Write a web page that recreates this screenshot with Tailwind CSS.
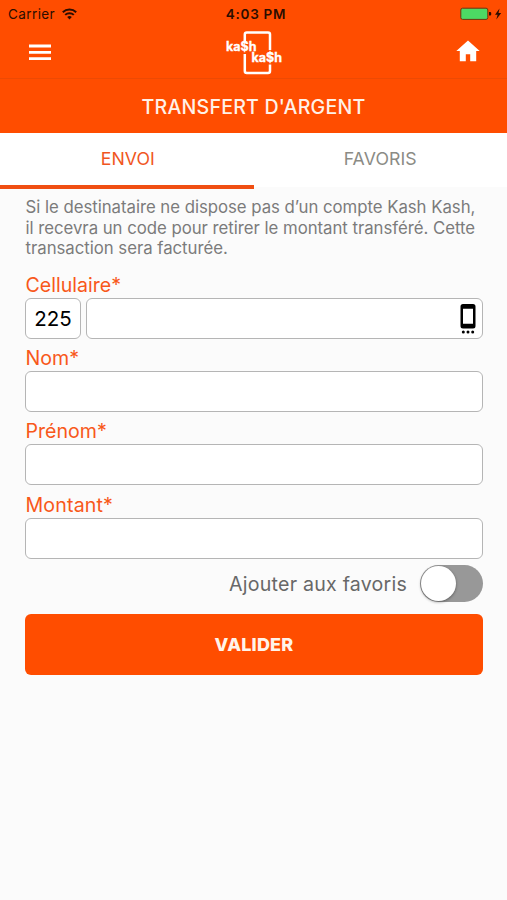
<!DOCTYPE html>
<html lang="fr">
<head>
<meta charset="utf-8">
<title>Transfert d'argent</title>
<script src="https://cdn.jsdelivr.net/npm/@tailwindcss/browser@4"></script>
</head>
<body class="w-[507px] h-[900px] overflow-hidden bg-[#fbfbfb] font-['Inter','Liberation_Sans',sans-serif]">
<header class="bg-[#ff4d00]">
  <div class="grid grid-cols-3 items-center h-[27px] px-2 text-[13.5px] leading-[27px] text-[#2b0d00]">
    <div class="flex items-center gap-[7px]"><span class="tracking-[0.4px]">Carrier</span>
      <svg class="w-[15px] h-[12px] -mt-px" viewBox="0 0 15 12" fill="none" stroke="#2b0d00" stroke-width="2"><path d="M.8 4.3a9.6 9.6 0 0 1 13.4 0M3.2 6.9a6.1 6.1 0 0 1 8.6 0"/><path d="M7.5 11.4L5.2 9.1a3.3 3.3 0 0 1 4.6 0z" fill="#2b0d00" stroke="none"/></svg>
    </div>
    <div class="text-center font-semibold tracking-[0.7px] pl-[5px] pt-px">4:03 PM</div>
    <div class="flex justify-end items-center -mr-[3px]">
      <svg class="w-[42px] h-[14px]" viewBox="0 0 42 14"><rect x=".8" y="1.2" width="27" height="11.2" rx="1.8" fill="#4cd964" stroke="#6b3510"/><path d="M29 5h1.2a1 1 0 0 1 1 1v1.600a1 1 0 0 1-1 1H29z" fill="#2b0d00"/><path d="M39.500 1.500L35 7.800h2.600l-1.300 4.700 4.900-6.400h-2.700z" fill="#2b0d00"/></svg>
    </div>
  </div>
  <div class="grid grid-cols-3 items-center h-[52px] border-b border-[#ed4a04] pl-[29px] pr-[27px]">
    <svg class="w-[22px] h-[17px] -mt-px" viewBox="0 0 22 17" fill="#fff"><path d="M0 .6h22v2.800H0zM0 6.900h22v2.800H0zM0 13.200h22V16H0z"/></svg>
    <svg class="w-[60px] h-[48px] justify-self-center -mt-px" viewBox="0 0 60 48">
      <path d="M20.800 13V6.500a2 2 0 0 1 2-2H44a2 2 0 0 1 2 2V22M20.800 26v17a2 2 0 0 0 2 2H44a2 2 0 0 0 2-2v-6.500" fill="none" stroke="#fff" stroke-width="2.500"/>
      <g fill="#fff" stroke="#fff" stroke-width=".3" font-family="Inter" font-weight="700" font-size="12.500"><text x="2" y="23" textLength="30.500" lengthAdjust="spacingAndGlyphs">ka$h</text><text x="27.500" y="34" textLength="30.500" lengthAdjust="spacingAndGlyphs">ka$h</text></g>
    </svg>
    <svg class="w-[24px] h-[22px] justify-self-end -mt-[3px]" viewBox="0 0 24 22"><path d="M12 .5L.3 11h3.500v10.200h6v-7h4.400v7h6V11h3.500z" fill="#fff"/></svg>
  </div>
  <h1 class="flex items-center justify-center h-[54px] pt-[3px] text-[19.600px] text-[#fff1e8] font-[450] tracking-[0.2px]">TRANSFERT D'ARGENT</h1>
</header>
<nav class="grid grid-cols-2 h-[54px] bg-white text-center text-[17.700px] leading-[52px]">
  <div class="border-b-4 border-[#f04e12] text-[#f0561e] pl-[2px]">ENVOI</div>
  <div class="text-[#8b8b85] tracking-[0.1px]">FAVORIS</div>
</nav>
<main class="pl-[25px] pr-[24px] pt-[10px] text-[#7b7b7b]">
  <p class="h-[62px] text-[16.800px] leading-[20.700px] tracking-[-0.035px] whitespace-nowrap pl-[0.5px]">Si le destinataire ne dispose pas d’un compte Kash Kash,<br>il recevra un code pour retirer le montant transféré. Cette<br>transaction sera facturée.</p>
  <form class="text-[19.600px] leading-[26px] text-[#f8581a]">
    <label class="block pt-[13px] pl-[0.5px] h-[39px]">Cellulaire*</label>
    <div class="flex gap-[5px] h-[41px]">
      <div class="w-[56px] rounded-[6px] border border-[#b5b5b5] bg-white text-black text-center text-[20.500px] leading-[39px]">225</div>
      <div class="flex-1 flex items-center justify-end pr-[6px] rounded-[6px] border border-[#b5b5b5] bg-white">
        <svg class="w-[16px] h-[30px] mt-px" viewBox="0 0 16 30"><path fill-rule="evenodd" d="M3 0h10a2.500 2.500 0 0 1 2.500 2.500v19.500a2.500 2.500 0 0 1-2.500 2.500H3A2.500 2.500 0 0 1 .5 22V2.500A2.500 2.500 0 0 1 3 0zM3 4.800v15h10v-15z"/><circle cx="3.300" cy="28" r="1.500"/><circle cx="8" cy="28" r="1.500"/><circle cx="12.700" cy="28" r="1.500"/></svg>
      </div>
    </div>
    <label class="block pt-[6px] pl-[0.5px] h-[32px]">Nom*</label>
    <div class="h-[41px] rounded-[6px] border border-[#b5b5b5] bg-white"></div>
    <label class="block pt-[6px] pl-[0.5px] h-[32px]">Prénom*</label>
    <div class="h-[41px] rounded-[6px] border border-[#b5b5b5] bg-white"></div>
    <label class="block pt-[7px] pl-[0.5px] h-[33px] tracking-[0.15px]">Montant*</label>
    <div class="h-[41px] rounded-[6px] border border-[#b5b5b5] bg-white"></div>
    <div class="flex items-center justify-end gap-[13px] pt-[6px] h-[49px] text-[#686868]">
      <span class="-mt-[5px] tracking-[0.22px]">Ajouter aux favoris</span>
      <div class="w-[63px] h-[37px] p-[1px] rounded-full bg-[#989898] self-start"><div class="size-[35px] rounded-full bg-white shadow-[0_1px_3px_rgba(0,0,0,0.4)]"></div></div>
    </div>
  </form>
  <div class="mt-[6px] h-[61px] rounded-[6px] bg-[#ff4d00] text-[#fff3ea] text-center font-extrabold text-[18px] tracking-[0.2px] leading-[61px]">VALIDER</div>
</main>
</body>
</html>
